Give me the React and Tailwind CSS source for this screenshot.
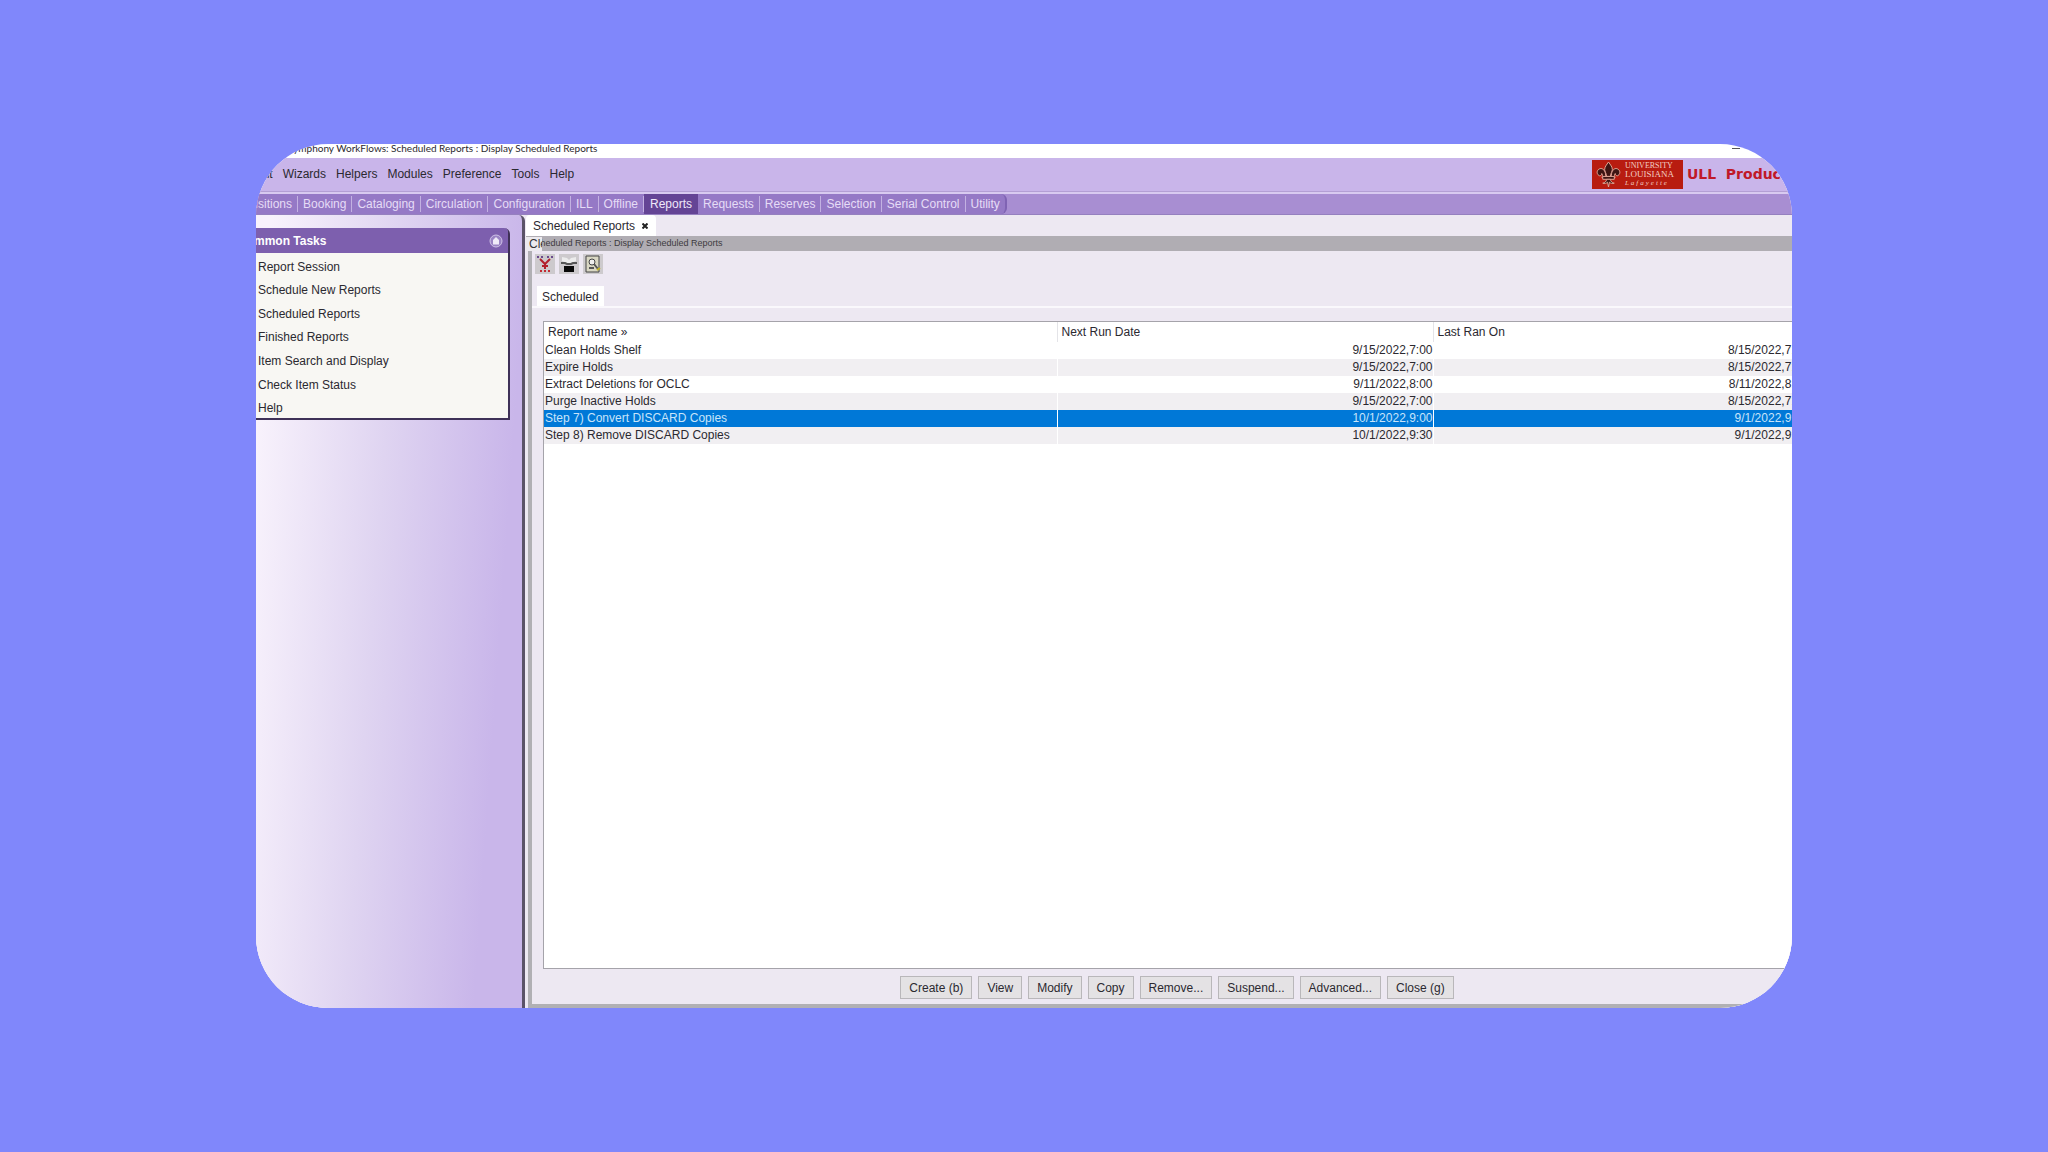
import React from "react";

const menus = ["Edit", "Wizards", "Helpers", "Modules", "Preference", "Tools", "Help"];

const modules = [
  "Acquisitions",
  "Booking",
  "Cataloging",
  "Circulation",
  "Configuration",
  "ILL",
  "Offline",
  "Reports",
  "Requests",
  "Reserves",
  "Selection",
  "Serial Control",
  "Utility",
];

const tasks = [
  "Report Session",
  "Schedule New Reports",
  "Scheduled Reports",
  "Finished Reports",
  "Item Search and Display",
  "Check Item Status",
  "Help",
];

const reports = [
  { name: "Clean Holds Shelf", next: "9/15/2022,7:00", last: "8/15/2022,7:00" },
  { name: "Expire Holds", next: "9/15/2022,7:00", last: "8/15/2022,7:00" },
  { name: "Extract Deletions for OCLC", next: "9/11/2022,8:00", last: "8/11/2022,8:00" },
  { name: "Purge Inactive Holds", next: "9/15/2022,7:00", last: "8/15/2022,7:00" },
  { name: "Step 7) Convert DISCARD Copies", next: "10/1/2022,9:00", last: "9/1/2022,9:00", selected: true },
  { name: "Step 8) Remove DISCARD Copies", next: "10/1/2022,9:30", last: "9/1/2022,9:30" },
];

const actions = ["Create (b)", "View", "Modify", "Copy", "Remove...", "Suspend...", "Advanced...", "Close (g)"];

function UniversityLogo() {
  return (
    <div className="flex h-[29px] w-[91px] shrink-0 items-center gap-1 bg-[#b81c10] pl-1 font-['Liberation_Serif',serif] text-[#f3cfc4]">
      <svg viewBox="0 0 26 28" className="h-[27px] w-[25px] shrink-0" fill="#3d1512" stroke="#e0a898" strokeWidth="1">
        <path d="M13 1c-2 3-4 5-4 8 0 2 2 4 2 7h4c0-3 2-5 2-7 0-3-2-5-4-8z" />
        <path d="M10 15c0-5-3-8-6-7-3 1-4 5-1 7 1 1 3 0 3-2 1 1 1 3 0 4l3 1z" />
        <path d="M16 15c0-5 3-8 6-7 3 1 4 5 1 7-1 1-3 0-3-2-1 1-1 3 0 4l-3 1z" />
        <path d="M7 16h12v3H7z" />
        <path d="M11 19c0 2-2 4-4 4 2 1 4 0 5-1l1 5 1-5c1 1 3 2 5 1-2 0-4-2-4-4z" />
      </svg>
      <div className="flex flex-col whitespace-nowrap">
        <span className="text-[8px] leading-[8px]">UNIVERSITY</span>
        <span className="text-[9px] leading-[9px]">LOUISIANA</span>
        <span className="text-[7px] leading-[8px] tracking-[2px] italic">Lafayette</span>
      </div>
    </div>
  );
}

function ToolButton({ label, children }) {
  return (
    <button aria-label={label} className="flex size-5 items-center justify-center bg-[#cdcacd]">
      <svg viewBox="0 0 20 20" className="size-5" fill="none">
        {children}
      </svg>
    </button>
  );
}

function Sidebar() {
  return (
    <aside className="w-[269px] shrink-0 rounded-tr-md border-r-3 border-[#5b5368] bg-[linear-gradient(94deg,#f8f2fc_5%,#dfd4f1_45%,#c9b6ea_85%)] pt-[13px]">
      <section className="mr-[12px] rounded-tr-md border-r-2 border-b-2 border-[#3f3157] bg-[#f8f7f3]">
        <header className="flex h-[25px] items-center justify-between rounded-tr bg-[#7d5fae] pr-[5px]">
          <h2 className="ml-[-18px] pt-px text-[12px] font-bold text-white">Common Tasks</h2>
          <button aria-label="Collapse">
            <svg viewBox="0 0 14 14" className="size-[14px]">
              <circle cx="7" cy="7" r="6" fill="#9a83c4" stroke="#cfc2e6" />
              <path d="M7 3l3 3v4.500H4V6z" fill="#efeaf8" />
            </svg>
          </button>
        </header>
        <ul className="-mb-[3px] grid h-[168px] grid-rows-7 pt-[2px] pb-px pl-[2px]">
          {tasks.map((task) => (
            <li key={task} className="flex items-center">
              <a href="#" className="leading-none">{task}</a>
            </li>
          ))}
        </ul>
      </section>
    </aside>
  );
}

function ReportsTable() {
  return (
    <div className="min-h-0 flex-1 overflow-hidden border-y border-l border-[#a5a3aa] bg-white">
      <table className="w-[calc(100%+16px)] table-fixed border-collapse leading-[17px]">
        <colgroup>
          <col />
          <col className="w-[376px]" />
          <col className="w-[375px]" />
        </colgroup>
        <thead>
          <tr className="h-5 text-left">
            <th className="border-r border-[#e4e4e8] pt-px pb-0 pl-1 font-normal">Report name »</th>
            <th className="border-r border-[#e4e4e8] pt-px pb-0 pl-1 font-normal">Next Run Date</th>
            <th className="pt-px pb-0 pl-1 font-normal">Last Ran On</th>
          </tr>
        </thead>
        <tbody>
          {reports.map((r) => (
            <tr
              key={r.name}
              className={r.selected ? "h-[17px] bg-[#0078d7] text-[#c8e4fa]" : "h-[17px] even:bg-[#f1eff2]"}
            >
              <td className="border-r border-white p-0 pl-px">{r.name}</td>
              <td className="border-r border-white p-0 text-right">{r.next}</td>
              <td className="p-0 text-right">{r.last}</td>
            </tr>
          ))}
        </tbody>
      </table>
    </div>
  );
}

function Workspace() {
  return (
    <main className="flex min-w-0 flex-1 flex-col bg-[#ede8f2] pl-px">
      <div className="flex h-[21px] shrink-0">
        <div className="flex items-center gap-[7px] rounded-t bg-white pt-px pr-2 pl-[7px]">
          <span>Scheduled Reports</span>
          <button aria-label="Close tab">
            <svg viewBox="0 0 6 6" className="size-[6px]" stroke="#222" strokeWidth="2">
              <path d="M0.500 0.500l5 5M5.500 0.500l-5 5" />
            </svg>
          </button>
        </div>
      </div>
      <div className="relative flex h-[15px] shrink-0 items-center bg-[#b0adb3] pl-1 text-[9px] text-[#3d3b40]">
        Scheduled Reports : Display Scheduled Reports
        <span className="absolute top-px left-0 h-[14px] w-4 overflow-hidden bg-[#eceaee] pl-[3px] text-[12px] leading-[15px] text-[#333]">
          Clean
        </span>
      </div>
      <div className="ml-[2px] flex min-h-0 flex-1 flex-col border-b-4 border-l-4 border-[#b1b0b4]">
        <div className="flex gap-1 pt-[3px] pb-1 pl-[3px]">
          <ToolButton label="Remove schedule">
            <path d="M2 3h2M6 3h2M12 3h2M16 3h2" stroke="#6b4a8c" strokeWidth="2" />
            <path d="M5 5l5 5 5-5M10 9v6M7 12h6" stroke="#b3202c" strokeWidth="2" />
            <path d="M5 17h2M9 17h2M13 17h2" stroke="#c42a34" strokeWidth="2" />
          </ToolButton>
          <ToolButton label="Print">
            <path d="M3 3l5 1 2 2 2-2 5-1v4l-5 2H8L3 7z" fill="#ececec" />
            <path d="M2 9h4l2 1h4l2-1h4" stroke="#555" strokeWidth="2" />
            <path d="M5 12h10v6H5z" fill="#080808" />
          </ToolButton>
          <ToolButton label="Properties">
            <path d="M3 2h13v16H3z" fill="#d9d7c4" stroke="#444" strokeWidth="1" />
            <circle cx="9" cy="8" r="3" stroke="#444" fill="#eee" />
            <path d="M6 14h5M11 10l4 5" stroke="#555" strokeWidth="2" />
            <path d="M14 16l3-2" stroke="#c2b52c" strokeWidth="2" />
          </ToolButton>
        </div>
        <div className="flex h-[30px] shrink-0 items-end border-b-2 border-[#faf8fc] pl-[5px]">
          <button className="h-5 bg-white px-[5px] pt-px leading-5">Scheduled</button>
        </div>
        <div className="flex min-h-0 flex-1 flex-col pt-[13px] pl-[11px]">
          <ReportsTable />
        </div>
        <footer className="flex shrink-0 justify-center gap-[6px] pt-[7px] pb-[5px] pl-[30px]">
          {actions.map((action) => (
            <button key={action} className="h-[23px] border border-[#b9b7ba] bg-[#e4e2e4] px-2">
              {action}
            </button>
          ))}
        </footer>
      </div>
    </main>
  );
}

export default function App() {
  return (
    <div className="flex min-h-screen items-center justify-center bg-[#8087fb]">
      <div className="flex aspect-video w-3/4 flex-col overflow-hidden rounded-[72px] bg-white font-['Liberation_Sans',Arial,sans-serif] text-[12px] text-[#2b2930]">
        <div className="flex h-[14px] shrink-0 items-center justify-between pr-[52px] pb-[6px] pl-[32px]">
          <span className="font-['Lato',sans-serif] text-[10px] leading-none">
            Symphony WorkFlows: Scheduled Reports : Display Scheduled Reports
          </span>
          <button aria-label="Minimize" className="h-px w-2 bg-[#555]" />
        </div>

        <div className="flex h-[34px] shrink-0 items-center justify-between border-b border-[#b39fd4] bg-[#c9b5ea]">
          <nav className="ml-[-4px] flex gap-[10px] pb-px">
            {menus.map((menu) => (
              <button key={menu}>{menu}</button>
            ))}
          </nav>
          <div className="mr-[-20px] flex items-center gap-1 pb-px">
            <UniversityLogo />
            <span className="font-['DejaVu_Sans',sans-serif] text-[14px] font-bold whitespace-pre text-[#c01828]">
              ULL  Production
            </span>
          </div>
        </div>

        <div className="flex h-[23px] shrink-0 border-t-2 border-b border-t-[#d8caf0] border-b-[#9580bf] bg-[#a88ed2]">
          <nav className="ml-[-33px] flex items-center rounded-r-md border-r-2 border-[#7f63b3] bg-[#9579c6]">
            {modules.map((name) => (
              <button
                key={name}
                className={
                  name === "Reports"
                    ? "h-full bg-[#644495] px-[6px] text-[#efe8fa]"
                    : "h-4 border-r border-[#c3b1e2] px-[5px] leading-4 text-[#e6dcf6] last:border-0"
                }
              >
                {name}
              </button>
            ))}
          </nav>
        </div>

        <div className="flex min-h-0 flex-1 bg-[#ede8f2]">
          <Sidebar />
          <Workspace />
        </div>
      </div>
    </div>
  );
}
